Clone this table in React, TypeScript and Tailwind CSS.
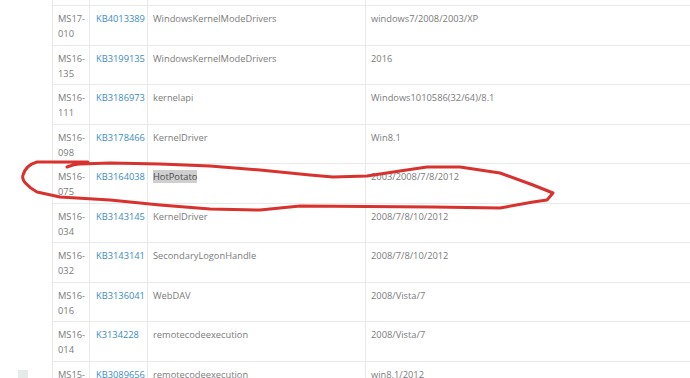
const rows = [
  { id: 'MS17-\n010', kb: 'KB4013389', name: 'WindowsKernelModeDrivers', os: 'windows7/2008/2003/XP' },
  { id: 'MS16-\n135', kb: 'KB3199135', name: 'WindowsKernelModeDrivers', os: '2016' },
  { id: 'MS16-\n111', kb: 'KB3186973', name: 'kernelapi', os: 'Windows1010586(32/64)/8.1' },
  { id: 'MS16-\n098', kb: 'KB3178466', name: 'KernelDriver', os: 'Win8.1' },
  { id: 'MS16-\n075', kb: 'KB3164038', name: 'HotPotato', os: '2003/2008/7/8/2012', mark: true },
  { id: 'MS16-\n034', kb: 'KB3143145', name: 'KernelDriver', os: '2008/7/8/10/2012' },
  { id: 'MS16-\n032', kb: 'KB3143141', name: 'SecondaryLogonHandle', os: '2008/7/8/10/2012' },
  { id: 'MS16-\n016', kb: 'KB3136041', name: 'WebDAV', os: '2008/Vista/7' },
  { id: 'MS16-\n014', kb: 'K3134228', name: 'remotecodeexecution', os: '2008/Vista/7' },
  { id: 'MS15-\n077', kb: 'KB3089656', name: 'remotecodeexecution', os: 'win8.1/2012' },
];

function Row({ row }: { row: (typeof rows)[number] }) {
  return (
    <div className="flex h-[39.5px] border-b border-[#e9e9e9]">
      <div className="w-[37px] shrink-0 whitespace-pre-line border-r border-[#e9e9e9] pl-[5px] pt-[5px]">{row.id}</div>
      <div className="w-[58px] shrink-0 border-r border-[#e9e9e9] pl-[6px] pt-[5px] text-[#3b8cc4]">{row.kb}</div>
      <div className="w-[218px] shrink-0 border-r border-[#e9e9e9] pl-[5px] pt-[5px]">
        {row.mark ? <span className="bg-[#cfcfcf] text-[#4a4a4a]">{row.name}</span> : row.name}
      </div>
      <div className="flex-1 pl-[5px] pt-[5px]">{row.os}</div>
    </div>
  );
}

export default function App() {
  return (
    <div className="relative h-[378px] w-[690px] overflow-hidden bg-white font-['Open_Sans',sans-serif] text-[9.3px] leading-[15px] text-[#7b7b7b]">
      <div className="ml-[52px] w-[700px] border-l border-[#e9e9e9]">
        <div className="flex h-[6px] border-b border-[#e9e9e9]">
          <div className="w-[37px] border-r border-[#e9e9e9]" />
          <div className="w-[58px] border-r border-[#e9e9e9]" />
          <div className="w-[218px] border-r border-[#e9e9e9]" />
        </div>
        {rows.map((row) => (
          <Row key={row.kb} row={row} />
        ))}
      </div>

      <div className="absolute left-[18px] top-[370px] h-[8px] w-[10px] bg-[#e4ebe8]" />

      <svg className="pointer-events-none absolute inset-0" width="690" height="378" viewBox="0 0 690 378">
        <path
          d="M67 167 C72 165 76 164 80 164 L110 163 L160 164 L210 166 L260 170 L310 175 L333 177 L367 176 L400 171 L427 167 L460 167 L500 173 L533 185 L553 193 L547 200 L533 202 L500 208 L433 207 L300 206 L260 210 L210 209 L160 205 L110 200 L60 197 L37 192 C28 187 21 180 23 175 C25 168 30 164 37 162 L88 162"
          fill="none"
          stroke="#d8322e"
          strokeWidth="3"
          strokeLinecap="round"
          strokeLinejoin="round"
        />
      </svg>
    </div>
  );
}
